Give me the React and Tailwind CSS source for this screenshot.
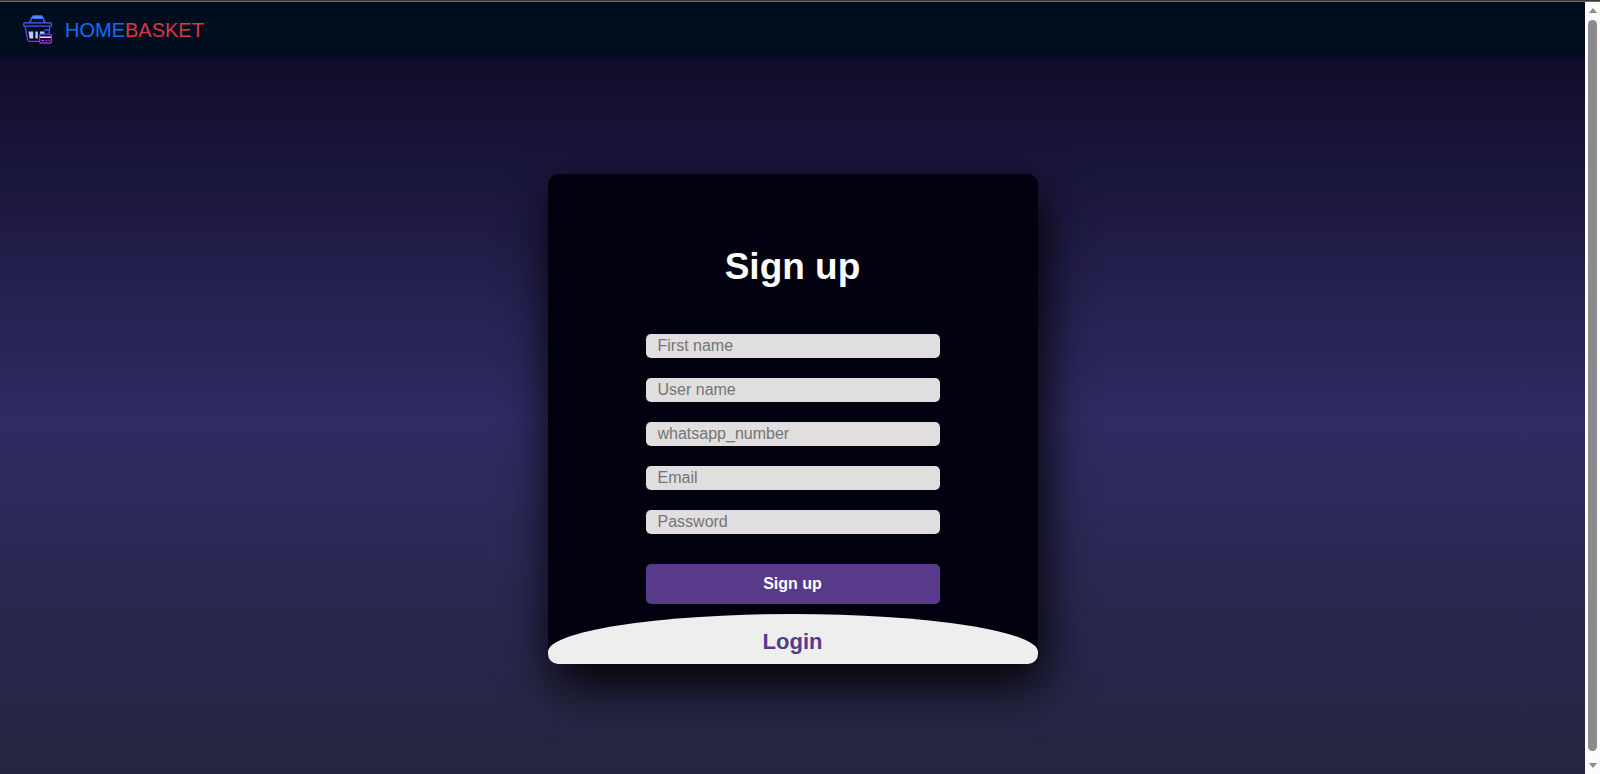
const fields = [
  { id: "first-name", label: "First name", type: "text" },
  { id: "user-name", label: "User name", type: "text" },
  { id: "whatsapp", label: "whatsapp_number", type: "text" },
  { id: "email", label: "Email", type: "email" },
  { id: "password", label: "Password", type: "password" },
];

function BasketLogo() {
  return (
    <svg viewBox="0 0 30 30" className="size-[30px]" fill="none" aria-hidden="true">
      <defs>
        <linearGradient id="basket-line" x1="0" y1="0" x2="0" y2="30" gradientUnits="userSpaceOnUse">
          <stop offset="0" stopColor="#3d7dff" />
          <stop offset="0.45" stopColor="#4a4ff0" />
          <stop offset="1" stopColor="#b01fda" />
        </linearGradient>
        <linearGradient id="basket-slot" x1="0" y1="16" x2="0" y2="24" gradientUnits="userSpaceOnUse">
          <stop offset="0" stopColor="#8ccfff" />
          <stop offset="1" stopColor="#dccbff" />
        </linearGradient>
      </defs>
      <g stroke="url(#basket-line)" strokeWidth="1.3" strokeLinejoin="round" strokeLinecap="round">
        <path d="M6.5 6.9 8 5.8V4Q8 2.2 9.6 2.2M22 6.9 20.6 5.8V4Q20.6 2.2 19 2.2" />
        <rect x="9.5" y="1" width="9.8" height="2.4" rx="1.2" fill="#6ba0ff" />
        <rect x="0.7" y="7.8" width="27.8" height="3.4" rx="1.2" />
        <path d="M2.2 11.6 4.6 24.6Q5 26.4 7 26.4H15.5M27 11.6 26.2 17.5M22 15h4.2" />
        <rect x="16.5" y="19.2" width="12" height="8.8" rx="1.2" fill="#160a35" />
      </g>
      <path d="M5.4 16.5h4.8v7.1H6.6ZM12.4 16.5h2.4v7.1h-2.4ZM17 16.5h4.4v2.2H17Z" fill="url(#basket-slot)" />
      <path d="M17 22.2h11" stroke="#e2c8ff" strokeWidth="1.6" />
      <path d="M18.6 25.5h2.2M23 25.5h1M25.6 25.5h1" stroke="#b56cff" strokeWidth="1" />
    </svg>
  );
}

function Scrollbar() {
  return (
    <div aria-hidden="true" className="flex w-[15px] shrink-0 flex-col items-center bg-[#fcfcfc] py-[6px]">
      <svg viewBox="0 0 10 6" className="h-[5px] w-[10px]" fill="#8b8b8b">
        <path d="M5 0 10 6H0Z" />
      </svg>
      <div className="mt-[7px] mb-3 w-[9px] flex-1 rounded-full bg-[#8b8b8b]" />
      <svg viewBox="0 0 10 6" className="h-[5px] w-[10px]" fill="#8b8b8b">
        <path d="M5 6 10 0H0Z" />
      </svg>
    </div>
  );
}

export default function App() {
  return (
    <div className="flex h-screen flex-col overflow-hidden bg-[#0f0c29] font-['Liberation_Sans',Arial,sans-serif]">
      <div className="h-[2px] shrink-0 border-b border-[#6b6b6b] bg-[#3a3638]" />
      <div className="flex min-h-0 flex-1">
        <div className="min-w-0 flex-1 overflow-hidden">
          <header className="flex h-[55px] items-center bg-[#000d1f] px-[23px]">
            <a href="#" className="flex items-center gap-3">
              <BasketLogo />
              <span className="text-[20px] leading-[30px] text-[#0d6efd]">
                HOME<span className="text-[#dc3545]">BASKET</span>
              </span>
            </a>
          </header>
          <main className="flex min-h-[724px] items-center justify-center bg-[linear-gradient(to_bottom,#0f0c29,#302b63,#24243e)]">
            <div className="w-[490px] overflow-hidden rounded-[10px] bg-[#01000e] shadow-[5px_20px_50px_#000]">
              <form className="flex flex-col px-[98px] pt-16 pb-[10px]">
                <h1 className="text-center text-[37px] leading-[58px] font-bold text-white">Sign up</h1>
                <div className="mt-[38px] flex flex-col gap-5">
                  {fields.map((f) => (
                    <input
                      key={f.id}
                      id={f.id}
                      type={f.type}
                      placeholder={f.label}
                      aria-label={f.label}
                      className="h-6 w-full rounded-[5px] bg-[#e0dede] px-3 text-[16px] leading-6 text-black outline-none placeholder:text-[#757575]"
                    />
                  ))}
                </div>
                <button type="button" className="mt-[30px] h-10 rounded-[5px] bg-[#573b8a] text-[16px] font-bold text-white">
                  Sign up
                </button>
              </form>
              <div className="h-[50px] bg-[#eee] pt-3 text-center [border-radius:50%_50%_0_0/38px_38px_0_0]">
                <a href="#" className="text-[22px] leading-8 font-bold text-[#573b8a]">Login</a>
              </div>
            </div>
          </main>
        </div>
        <Scrollbar />
      </div>
    </div>
  );
}
